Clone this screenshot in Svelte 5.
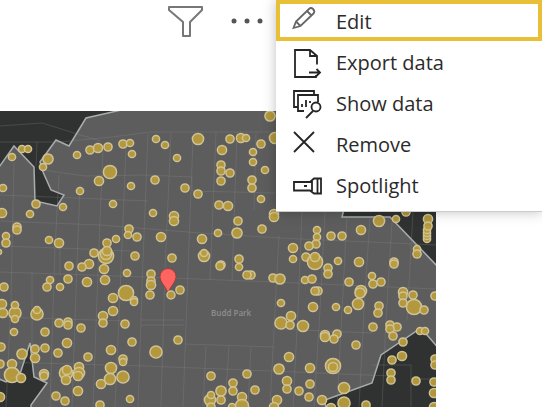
<script>
  const flat = [
    12,157,4, 22,149,4, 28,149,4, 48,159,5.5, 43,167,4, 77,155,4, 90,150,4.5, 98,148,5, 108,147,4.5, 123,144,4.5,
    130,143,4, 132,154,4, 110,172,7, 99,181,5, 80,191,4, 131,186,4, 3,188,4, 36,204,4.5, 63,207,4, 113,204,4,
    2,213,5, 30,214,4, 156,139,4, 165,145,4, 177,158,4, 198,139,6, 230,139,4.5, 241,138,5, 246,138,4, 261,144,4.5,
    270,116,5.5, 222,150,5, 253,152,4, 253,162,4, 265,170,4, 221,165,4.5, 221,171,4.5, 230,173,4.5, 221,181,4.5,
    252,180,4.5, 252,188,4.5, 155,180,4.5, 185,188,4.5, 198,194,4.5, 219,205,4.5, 228,206,5, 261,199,4, 275,138,6,
    153,213,4, 174,216,5, 274,214,5, 17,227,4.5, 17,230,4.5, 6,236,4, 6,243,4.5, 49,240,4, 59,243,5, 107,243,4.5,
    116,239,4, 129,229,4.5, 128,235,4, 137,237,4.5, 94,253,4.5, 106,256,8, 106,254,6, 107,251,5, 104,269,5, 89,264,5,
    82,267,4.5, 69,266,4.5, 135,256,4.5, 127,273,4, 68,279,4.5, 50,280,4, 47,287,4.5, 60,287,4, 87,282,5,
    105,280,5, 113,298,5, 126,293,8, 134,300,4, 4,287,4.5, 2,304,5, -1,252,3, 161,237,5, 174,221,5, 172,258,4.5,
    202,239,5, 218,233,4, 237,233,5.5, 238,221,4.5, 262,229,4.5, 274,217,5, 204,256,6, 204,253,4, 221,265,4.5,
    220,266,4.5, 239,259,4.5, 239,267,4, 251,275,4.5, 247,275,4.5, 273,278,4.5, 280,279,5.5, 281,303,4, 151,274,4.5,
    151,281,4.5, 151,285,5, 150,295,4.5, 180,290,4.5, 293,248,5, 293,259,4, 317,230,4, 317,237,4, 316,244,4.5,
    309,246,4.5, 331,236,4.5, 342,236,4.5, 361,230,5, 379,221,6, 396,219,4, 406,212,4.5, 428,219,5, 427,239,4,
    427,236,4, 427,233,4, 427,230,4, 428,226,4.5, 417,249,4, 417,254,4.5, 306,257,4.5, 315,262,8, 315,257,5,
    338,261,4, 328,268,4.5, 328,274,4.5, 359,262,5, 394,262,4.5, 394,264,4.5, 305,280,4, 312,279,4.5, 349,282,4.5,
    372,276,4, 373,284,4.5, 381,282,4.5, 318,291,4.5, 315,291,4.5, 361,291,6, 360,293,5.5, 358,304,6, 403,292,5,
    403,296,4.5, 413,295,4.5, 403,303,4.5, 414,307,8, 424,310,4.5, 313,307,5, 336,307,4, 348,310,4, 379,306,4.5,
    435,296,4.5, 3,313,5, 15,313,6.5, 15,319,4, 37,314,6.5, 14,332,4, 45,332,4.5, 59,323,4.5, 68,322,4.5,
    68,325,4.5, 81,328,4.5, 103,316,5, 103,323,4.5, 113,311,5, 125,324,4.5, 132,342,4.5, 67,343,5, 58,353,4.5,
    88,357,4.5, 111,350,5, 1,347,4.5, 22,354,5.5, 35,349,4.5, 45,348,4.5, 35,358,5, 44,374,5, 44,376,4.5, 12,364,5,
    12,375,8, 21,378,5, 0,364,4.5, 66,373,7, 67,370,5, 66,380,5, 79,367,5, 79,373,6, 78,376,5, 78,391,5, 56,396,4.5,
    65,401,4.5, 111,368,6, 110,379,6, 101,384,5, 123,377,6.5, 123,359,4.5, 123,362,4, 130,399,4, 100,405,4.5,
    0,397,5, 15,305,4, 37,310,4, 134,302,4, 156,352,6.5, 178,340,4.5, 211,376,4.5, 247,374,4.5, 233,383,4.5, 233,391,4.5, 255,390,4.5,
    221,391,5.5, 210,400,6, 211,395,4, 221,400,4.5, 242,397,5, 242,406,7, 232,407,4, 211,407,4.5, 277,400,5,
    274,407,5, 287,381,5, 287,389,4.5, 279,369,5.5, 289,357,5, 281,323,6.5, 291,316,5, 290,325,4.5, 303,326,6,
    325,335,5, 325,337,5, 337,334,4.5, 334,339,4.5, 356,345,4.5, 373,327,4.5, 378,313,4.5, 390,325,4.5, 397,327,4.5,
    390,329,4.5, 393,336,4.5, 403,342,4.5, 420,331,4, 425,331,4, 392,360,4.5, 402,356,5, 391,373,4.5, 391,380,4.5,
    416,381,4.5, 333,366,8, 333,367,5, 310,368,5, 310,384,4.5, 299,391,4.5, 309,397,4.5, 322,400,5, 344,388,6,
    344,403,6.5, 366,405,4.5, 331,408,5, 435,359,4.5, 435,365,4.5, 434,382,4.5, 434,393,5, 434,407,5
  ];
  const dots = [];
  for (let i = 0; i < flat.length; i += 3) dots.push({ x: flat[i], y: flat[i + 1], r: flat[i + 2] });

  const outside = [
    '-3,108 130,108 86,118 69,146 56,140 40,162 43,172 51,190 64,195 57,206 35,201 34,167 14,146 -3,170',
    '345,205 342,217 390,217 440,269 440,205',
    '326,412 325,400 372,383 381,355 421,328 440,350 440,412',
    '-3,378 6,382 20,374 30,343 34,377 47,383 31,405 31,412 -3,412'
  ];
  const roads = [
    'M0 126L42 123L100 141', 'M0 142H60L112 137L150 132H280', 'M43 170L85 176L145 175L192 177V191L275 193',
    'M0 195L100 199L148 201', 'M0 221L100 225L200 233L280 238L436 245', 'M0 246L60 248L130 251',
    'M0 272L60 274L145 277L275 282L436 289', 'M0 317L125 321', 'M141 320H184M141 325H184', 'M185 344L274 347',
    'M0 362L145 366L271 371L390 376', 'M280 329L372 333', 'M372 365H411L411 407M411 379H436',
    'M37 142L36 166M14 163L11 300L6 407', 'M59 175L55 248L50 407', 'M80 185L76 290L72 407', 'M103 150L98 270L93 407',
    'M126 148L121 270L115 407', 'M148 134L143 260L138 407', 'M171 133L165 270L161 407', 'M193 139L188 270L183 407',
    'M216 132L210 280M206 346L203 407', 'M237 132L232 281M229 346L225 407', 'M256 134L254 210M251 347L248 407',
    'M279 236L275 310L270 407', 'M302 212L298 310L293 407', 'M325 212L320 310L314 407', 'M347 217L342 310L337 407',
    'M370 217L364 310L359 407', 'M392 222L386 320L382 407', 'M413 212L407 320', 'M60 248V275M32 272V345'
  ];
  const items = [
    { icon: 'edit', label: 'Edit' },
    { icon: 'export', label: 'Export data' },
    { icon: 'show', label: 'Show data' },
    { icon: 'remove', label: 'Remove' },
    { icon: 'spotlight', label: 'Spotlight' }
  ];
</script>

{#snippet icon(name)}
  <svg class="icon" viewBox="0 0 32 32" aria-hidden="true">
    {#if name === 'edit'}
      <path d="M3.500 23L6 16.500L19 4Q21 2 23 4Q25.500 6.500 23.500 8.500L10.500 21ZM17 6L21.500 10.500M6 16.500L10.500 21" />
    {:else if name === 'export'}
      <path d="M27 18.500V10L20 4H5V31H26V29M20 4V10H27M19 26.500H30M26.500 23L30 26.500L26.500 30" />
    {:else if name === 'show'}
      <path d="M8 20H4V4H24V8M14 24H8V8H28V15M12 20V17M16 20V13M20 16V14" />
      <circle cx="26" cy="20" r="4.500" /><path d="M23 24L16 31" />
    {:else if name === 'remove'}
      <path d="M4 4L24 24M24 4L4 24" />
    {:else}
      <path d="M4 13H20L24 9.500H31V24.500H24L20 21.500H4ZM27.500 10V24M22 12V22M14 17H17" />
    {/if}
  </svg>
{/snippet}

<main>
  <header>
    <button class="tool" aria-label="Filters">
      <svg width="38" height="34" viewBox="0 0 38 34"><path d="M3 3H36V6L24 18V32H17V18L3 6Z" /></svg>
    </button>
    <button class="tool" aria-label="More options">
      <svg width="34" height="34" viewBox="0 0 34 34"><g class="more"><circle cx="4" cy="17" r="2.500" /><circle cx="17" cy="17" r="2.500" /><circle cx="30" cy="17" r="2.500" /></g></svg>
    </button>
  </header>

  <svg class="map" viewBox="0 111 436 296" role="img" aria-label="Map">
    <rect y="111" width="436" height="296" fill="#5d5d5d" />
    {#each outside as points}
      <polygon {points} fill="#303232" stroke="#a9adaf" stroke-width="1.500" />
    {/each}
    {#each roads as d}<path class="road" {d} />{/each}
    <text x="211" y="316">Budd Park</text>
    {#each dots as { x, y, r }}
      <circle class="dot" cx={x} cy={y} r={r - 0.4} />
    {/each}
    <path d="M168 294C167 287 160 283 160 276.500A8 8 0 0 1 176 276.500C176 283 169 287 168 294Z" fill="#ff6560" stroke="#a83b3a" />
    <circle class="dot" cx="171" cy="295" r="4" />
  </svg>

  <div class="menu" role="menu">
    {#each items as item, i}
      <button class:active={i === 0} role="menuitem">
        {@render icon(item.icon)}
        <span>{item.label}</span>
      </button>
    {/each}
  </div>
</main>

<style>
  :global(body) { margin: 0; background: #fff; }
  main { position: relative; overflow: hidden; font-family: "Open Sans", "Noto Sans", sans-serif; }
  header {
    box-sizing: border-box;
    height: 111px;
    padding: 4px 278px 0 0;
    display: flex;
    justify-content: flex-end;
    align-items: flex-start;
    gap: 26px;
  }
  button { border: 0; margin: 0; padding: 0; background: none; font: inherit; color: #2b2b2b; }
  .tool { display: flex; }
  .tool svg { fill: none; stroke: #777; stroke-width: 2; stroke-linejoin: round; }
  .tool .more { fill: #555; stroke: none; }
  .map { display: block; width: calc(100% - 106px); height: auto; }
  .road { fill: none; stroke: #8b8f8b; stroke-opacity: 0.35; stroke-width: 0.8; }
  .map text { font-size: 8px; font-weight: 600; font-family: "Noto Sans", sans-serif; fill: #8c8c8c; }
  .dot { fill: #b99c3c; stroke: #cfc295; stroke-width: 1.5; fill-opacity: 0.94; }
  .menu {
    position: absolute;
    top: 0;
    right: 0;
    box-sizing: border-box;
    width: 266px;
    padding-bottom: 6px;
    display: flex;
    flex-direction: column;
    background: #fff;
    border-bottom: 1px solid #ccc;
    box-shadow: 0 0 12px rgba(0, 0, 0, 0.25);
  }
  .menu button {
    box-sizing: border-box;
    height: 41px;
    padding: 0 10px;
    border: 4px solid transparent;
    display: flex;
    align-items: center;
    gap: 14px;
    font-size: 20px;
    line-height: 24px;
    text-align: left;
  }
  .menu span { padding-top: 3px; }
  .menu .active { border-color: #e9bf38; }
  .icon { width: 32px; height: 32px; fill: none; stroke: #252525; stroke-width: 1.8; }
  .active .icon { stroke: #666; }
</style>
